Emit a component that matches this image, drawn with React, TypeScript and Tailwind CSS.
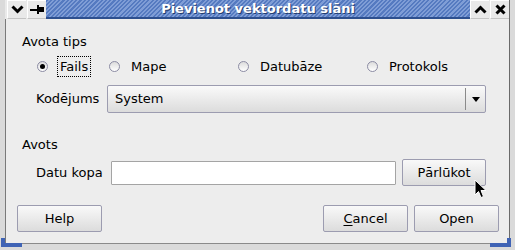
import type { ReactNode } from "react";

const TitleButton = ({ children }: { children: ReactNode }) => (
  <div className="w-[19px] h-[19px] flex items-center justify-center bg-[#e9e9e9] border-t border-l border-white border-b border-b-[#c4c4c4]">
    {children}
  </div>
);

const Radio = ({ checked }: { checked?: boolean }) => (
  <span className="w-[11px] h-[11px] rounded-full border border-[#8c8ca4] bg-gradient-to-b from-[#dcdcdc] to-white flex items-center justify-center">
    {checked && <span className="w-[5px] h-[5px] rounded-full bg-black" />}
  </span>
);

const Button = ({ children, className = "" }: { children: ReactNode; className?: string }) => (
  <div
    className={
      "h-[27px] flex items-center justify-center rounded-[2px] border border-[#9c9cb0] bg-gradient-to-b from-[#f9f9f9] to-[#dcdcdc] text-[13px] text-black " +
      className
    }
  >
    {children}
  </div>
);

export default function App() {
  return (
    <div className="relative w-[515px] h-[250px] overflow-hidden bg-[#dadada] font-['DejaVu_Sans',sans-serif] text-[13px] text-black">
      <div className="flex flex-col h-[244px] ml-[5px] mr-[5px] border-r border-[#6a6a6a]">
        {/* title bar */}
        <div className="flex h-[19px] shrink-0 pl-[2px] bg-[#e9e9e9]">
          <TitleButton>
            <svg width="13" height="9" viewBox="0 0 13 9">
              <path d="M1.5 1.5 L6.5 6.5 L11.5 1.5" fill="none" stroke="#000" strokeWidth="3" />
            </svg>
          </TitleButton>
          <div className="w-px" />
          <TitleButton>
            <svg width="16" height="11" viewBox="0 0 16 11">
              <rect x="1" y="5" width="7" height="2" fill="#000" />
              <rect x="8" y="1" width="2" height="9" fill="#000" />
              <rect x="10" y="3" width="5" height="5" fill="#000" />
            </svg>
          </TitleButton>
          <div className="flex-1 flex items-center justify-center border-b-2 border-[#2d4f8e] bg-[repeating-linear-gradient(135deg,#557ac0_0px,#557ac0_1.5px,#7f9dd6_1.5px,#7f9dd6_3px)]">
            <span className="text-white font-bold text-[13px] leading-none [text-shadow:1px_1px_0_#233d70]">
              Pievienot vektordatu slāni
            </span>
          </div>
          <TitleButton>
            <svg width="13" height="9" viewBox="0 0 13 9">
              <path d="M1.5 7.5 L6.5 2.5 L11.5 7.5" fill="none" stroke="#000" strokeWidth="3" />
            </svg>
          </TitleButton>
          <div className="w-px" />
          <TitleButton>
            <svg width="11" height="11" viewBox="0 0 11 11">
              <path d="M1.5 1.5 L9.5 9.5 M9.5 1.5 L1.5 9.5" stroke="#000" strokeWidth="3" />
            </svg>
          </TitleButton>
        </div>

        {/* content */}
        <div className="flex-1 flex flex-col bg-[#ededed] border-l border-[#7a7a7a] border-b border-b-[#8a8a8a] pl-[16px] pr-[10px]">
          <div className="mt-[15px] h-[16px] leading-[16px]">Avota tips</div>

          <div className="flex items-center h-[21px] mt-[6px] pl-[15px]">
            <div className="w-[72px] flex items-center">
              <Radio checked />
              <span className="ml-[9px] px-[2px] border border-dotted border-black leading-[19px]">Fails</span>
            </div>
            <div className="w-[129px] flex items-center">
              <Radio />
              <span className="ml-[11px]">Mape</span>
            </div>
            <div className="w-[129px] flex items-center">
              <Radio />
              <span className="ml-[11px]">Datubāze</span>
            </div>
            <div className="flex items-center">
              <Radio />
              <span className="ml-[11px]">Protokols</span>
            </div>
          </div>

          <div className="flex items-center mt-[8px] pl-[14px]">
            <span className="w-[71px]">Kodējums</span>
            <div className="w-[379px] h-[28px] flex items-center rounded-[2px] border border-[#9c9cb0] bg-gradient-to-b from-[#fafafa] to-[#dcdcdc]">
              <span className="flex-1 pl-[7px]">System</span>
              <span className="w-px h-[22px] bg-[#8a8a8a]" />
              <span className="w-[19px] flex items-center justify-center">
                <svg width="8" height="5" viewBox="0 0 8 5">
                  <path d="M0 0 H8 L4 5 Z" fill="#000" />
                </svg>
              </span>
            </div>
          </div>

          <div className="mt-[24px] h-[16px] leading-[16px]">Avots</div>

          <div className="flex items-center mt-[6px] pl-[14px]">
            <span className="w-[75px]">Datu kopa</span>
            <div className="w-[285px] h-[24px] bg-white border border-[#a4a4a4] rounded-[1px]" />
            <Button className="w-[84px] ml-[6px]">Pārlūkot</Button>
          </div>

          <div className="flex items-center mt-[19px]">
            <Button className="w-[85px] -ml-[5px]">Help</Button>
            <div className="flex-1" />
            <Button className="w-[85px]">
              <span>
                <span className="underline underline-offset-2">C</span>ancel
              </span>
            </Button>
            <Button className="w-[85px] ml-[6px]">Open</Button>
          </div>
        </div>
      </div>

      {/* window frame resize corners */}
      <div className="absolute left-[1px] bottom-[3px] w-[21px] h-[9px] border-l-[4px] border-b-[4px] border-[#3f63b5]" />
      <div className="absolute right-[4px] bottom-[3px] w-[21px] h-[9px] border-r-[4px] border-b-[4px] border-[#3f63b5]" />

      {/* mouse cursor */}
      <svg className="absolute left-[474px] top-[179px]" width="14" height="21" viewBox="0 0 14 21">
        <path
          d="M1 1 L1 16 L4.5 12.5 L7 18.5 L9.5 17.5 L7 11.5 L12 11.5 Z"
          fill="#000"
          stroke="#fff"
          strokeWidth="1"
          strokeLinejoin="round"
        />
      </svg>
    </div>
  );
}
